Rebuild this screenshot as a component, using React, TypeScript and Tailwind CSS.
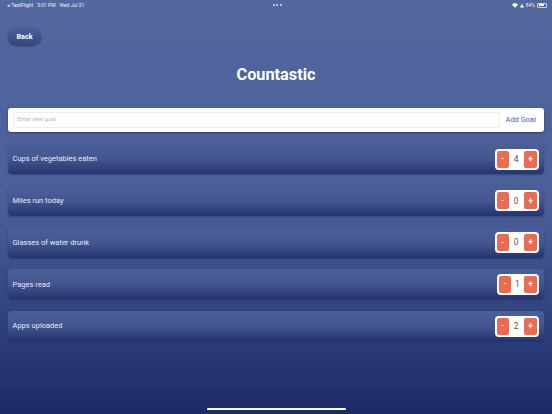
const goals: [string, number, string][] = [
  ["Cups of vegetables eaten", 4, "w-[44.5px]"],
  ["Miles run today", 0, "w-[44.5px]"],
  ["Glasses of water drunk", 0, "w-[44.5px]"],
  ["Pages read", 1, "w-[42px]"],
  ["Apps uploaded", 2, "w-[44.5px]"],
];

function Row({ label, value, width }: { label: string; value: number; width: string }) {
  return (
    <div className="flex h-[30px] items-center justify-between rounded-[4px] bg-gradient-to-b from-[#4a5f98] via-[#43568f] to-[#25346f] pl-[4.5px] pr-[5px] shadow-[0_1px_2px_rgba(20,30,80,0.35)]">
      <span className="text-[7.5px] leading-none text-[#e6e9f2]">{label}</span>
      <div className={`flex h-[21px] items-center justify-between rounded-[4px] bg-white px-[2px] ${width}`}>
        <button className="flex h-[17px] w-[12px] items-center justify-center rounded-[2px] bg-[#ee6a4f] text-[8px] font-bold leading-none text-white">-</button>
        <span className="text-[8.5px] leading-none text-[#555555]">{value}</span>
        <button className="flex h-[17px] w-[13px] items-center justify-center rounded-[2px] bg-[#ee6a4f] text-[8.5px] font-bold leading-none text-white">+</button>
      </div>
    </div>
  );
}

export default function App() {
  return (
    <div className="relative flex h-[414px] w-[552px] flex-col overflow-hidden bg-gradient-to-b from-[#53689f] via-[#4a5e98] to-[#1c2a68] font-['Roboto','Liberation_Sans',Arial,sans-serif]">
      <div className="flex h-[10px] items-center justify-between pl-[7px] pr-[5px] text-[5px] leading-none text-[#eef0f6]">
        <div className="flex w-[100px] items-center gap-[4px] whitespace-nowrap">
          <span>◂ TestFlight</span>
          <span>5:01 PM</span>
          <span>Wed Jul 31</span>
        </div>
        <div className="flex gap-[1.5px]">
          <span className="h-[2px] w-[2px] rounded-full bg-[#dfe3ee]" />
          <span className="h-[2px] w-[2px] rounded-full bg-[#dfe3ee]" />
          <span className="h-[2px] w-[2px] rounded-full bg-[#dfe3ee]" />
        </div>
        <div className="flex w-[100px] items-center justify-end gap-[2px]">
          <svg width="6" height="5" viewBox="0 0 12 9"><path d="M0 3 C3 -1 9 -1 12 3 L6 9 Z" fill="#ffffff" /></svg>
          <svg width="4" height="5" viewBox="0 0 8 10"><path d="M4 0 L6 7 H8 V9 H0 V7 H2 Z" fill="#ffffff" /></svg>
          <span>84%</span>
          <span className="flex h-[5px] w-[10px] items-center rounded-[1px] border-[0.5px] border-white/70 p-[0.5px]">
            <span className="h-full w-[84%] bg-white" />
          </span>
        </div>
      </div>

      <div className="pl-[8px] pt-[18px]">
        <button className="block h-[17px] w-[33px] rounded-full bg-gradient-to-b from-[#4a5f9c] to-[#34477f] text-[7.2px] font-bold leading-none text-white shadow-[0_1px_2px_rgba(20,30,70,0.7)]">
          Back
        </button>
      </div>

      <h1 className="mt-[21px] text-center text-[16.3px] font-bold leading-[18px] text-white">Countastic</h1>

      <div className="mx-[8px] mt-[24px] flex h-[24px] items-center justify-between rounded-[3px] bg-white pl-[4.5px] pr-[8px] shadow-[0_1px_2px_rgba(20,30,70,0.6)]">
        <div className="flex h-[16px] w-[487px] items-center rounded-[2px] border border-[#ececec] pl-[4px] text-[5.8px] leading-none text-[#b5b5b5]">
          Enter new goal
        </div>
        <span className="whitespace-nowrap text-[7.5px] leading-none text-[#4a62a8]">Add Goal</span>
      </div>

      <div className="mx-[8px] mt-[12px] flex flex-col gap-[11.75px]">
        {goals.map(([label, value, width]) => (
          <Row key={label} label={label} value={value} width={width} />
        ))}
      </div>

      <div className="absolute bottom-[4px] left-[206.5px] h-[2px] w-[139px] rounded-full bg-white" />
    </div>
  );
}
